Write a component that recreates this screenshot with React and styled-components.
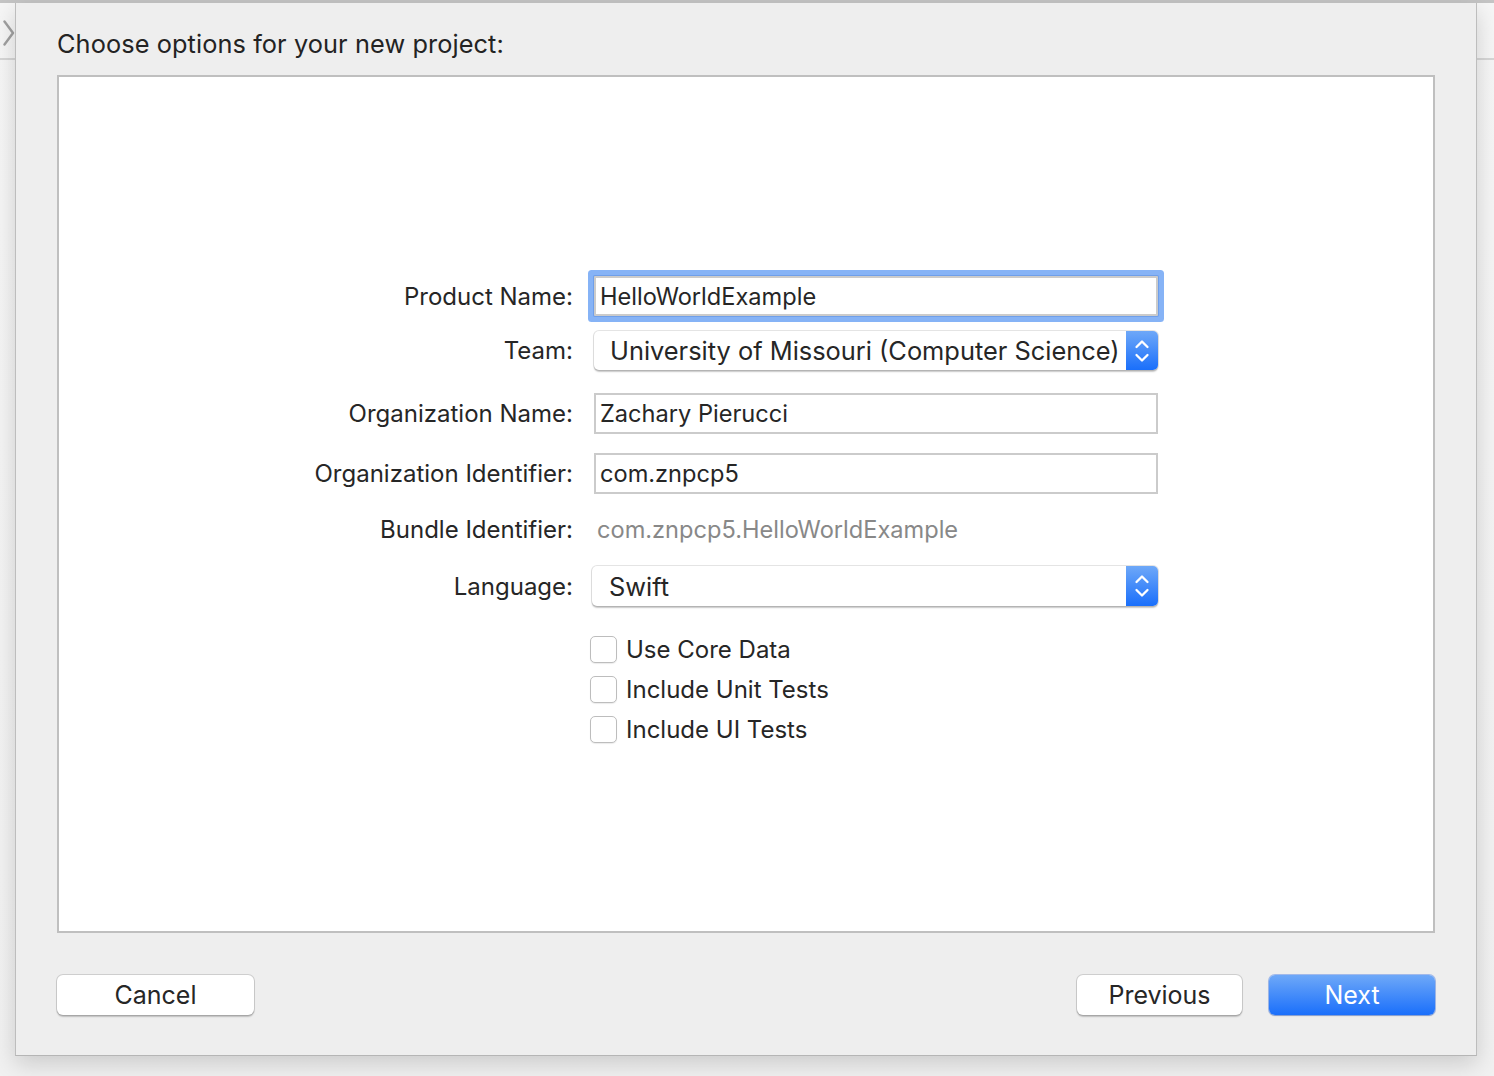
import React from 'react';
import styled, { createGlobalStyle } from 'styled-components';

const Global = createGlobalStyle`
  html, body { margin: 0; padding: 0; }
  body {
    width: 1494px;
    height: 1076px;
    overflow: hidden;
    font-family: Inter, "Helvetica Neue", "Liberation Sans", Arial, sans-serif;
    background: #f5f5f5;
    -webkit-font-smoothing: antialiased;
  }
`;

const Window = styled.div`
  position: relative;
  width: 1494px;
  height: 1076px;
  box-sizing: border-box;
  border-top: 3px solid #c4c4c4;
  background: linear-gradient(#f6f6f6, #f1f1f1);
  display: flex;
  flex-direction: column;
`;

const Toolbar = styled.div`
  height: 57px;
  border-bottom: 2px solid #d6d6d6;
  display: flex;
  align-items: flex-start;
  padding: 17px 0 0 3px;
  box-sizing: border-box;
`;

const Sheet = styled.div`
  position: absolute;
  left: 15px;
  top: 0;
  width: 1462px;
  height: 1053px;
  box-sizing: border-box;
  background: #eeeeee;
  border-left: 1px solid #bdbdbd;
  border-right: 1px solid #bdbdbd;
  border-bottom: 1px solid #b5b5b5;
  box-shadow: 0 8px 22px rgba(0, 0, 0, 0.16);
  display: flex;
  flex-direction: column;
  padding: 0 41px;
`;

const Title = styled.div`
  height: 72px;
  box-sizing: border-box;
  padding-top: 8px;
  display: flex;
  align-items: center;
  font-size: 25.3px;
  color: #232323;
  letter-spacing: 0.1px;
`;

const ContentBox = styled.div`
  height: 858px;
  box-sizing: border-box;
  border: 2px solid #bfbfbf;
  background: #ffffff;
  display: flex;
  flex-direction: column;
  padding-top: 199px;
`;

const Row = styled.div`
  display: grid;
  grid-template-columns: 514px 564px;
  column-gap: 21px;
  align-items: center;
  height: ${p => p.$h}px;
  margin-top: ${p => p.$mt || 0}px;
`;

const Label = styled.div`
  text-align: right;
  font-size: 24px;
  color: #262626;
`;

const TextField = styled.input`
  height: 100%;
  width: 100%;
  box-sizing: border-box;
  margin: 0;
  border: 2px solid #cbcbcb;
  border-radius: ${p => (p.$focused ? '1px' : '0')};
  padding: 0 4px;
  font: inherit;
  font-size: 23.6px;
  color: #262626;
  background: #fff;
  outline: none;
  box-shadow: ${p =>
    p.$focused ? '0 0 0 1px #6f9fea, 0 0 0 6px #86b3f6' : 'none'};
`;

const StaticValue = styled.div`
  font-size: 23.6px;
  color: #888888;
  padding-left: 3px;
`;

const Popup = styled.div`
  height: 100%;
  margin-left: ${p => p.$shift || 0}px;
  display: flex;
  align-items: stretch;
  background: #fff;
  border-radius: 5px;
  box-shadow: 0 0 0 1px rgba(0, 0, 0, 0.1), 0 1.5px 1.5px rgba(0, 0, 0, 0.22);
  overflow: hidden;
`;

const PopupText = styled.div`
  flex: 1;
  display: flex;
  align-items: center;
  padding-left: ${p => p.$pad}px;
  font-size: 25.4px;
  color: #262626;
`;

const Stepper = styled.div`
  width: 32px;
  display: flex;
  align-items: center;
  justify-content: center;
  background: linear-gradient(#6ea8f8, #1a6ffb);
`;

const CheckRow = styled.label`
  display: flex;
  align-items: center;
  height: 40px;
  margin-left: -4px;
`;

const CheckBox = styled.span`
  width: 27px;
  height: 27px;
  box-sizing: border-box;
  border: 1.5px solid #bdbdbd;
  border-radius: 5px;
  background: #fff;
  box-shadow: 0 1px 1px rgba(0, 0, 0, 0.08);
`;

const CheckText = styled.span`
  margin-left: 9px;
  font-size: 24px;
  color: #262626;
`;

const Footer = styled.div`
  display: flex;
  align-items: center;
  margin-top: 42px;
  height: 40px;
`;

const Spacer = styled.div`
  flex: 1;
`;

const Button = styled.button`
  width: ${p => p.$w}px;
  height: 40px;
  margin: 0 0 0 ${p => p.$ml || 0}px;
  padding: 0;
  box-sizing: border-box;
  border-radius: 6px;
  font-family: inherit;
  font-size: 25px;
  border: none;
  color: ${p => (p.$primary ? '#ffffff' : '#262626')};
  background: ${p =>
    p.$primary ? 'linear-gradient(#6ea8f8, #1a6ffb)' : '#ffffff'};
  box-shadow: ${p =>
    p.$primary
      ? '0 0 0 1px rgba(20, 90, 230, 0.35), 0 1px 1.5px rgba(0, 0, 0, 0.2)'
      : '0 0 0 1px rgba(0, 0, 0, 0.13), 0 1.5px 1.5px rgba(0, 0, 0, 0.2)'};
`;

const Chevron = () => (
  <svg width="12" height="28" viewBox="0 0 12 28">
    <path d="M1.5 1.5 L10 13 L1.5 24.5" fill="none" stroke="#a0a0a0" strokeWidth="2.4" strokeLinecap="round" strokeLinejoin="round" />
  </svg>
);

const UpDown = () => (
  <svg width="16" height="26" viewBox="0 0 16 26">
    <path d="M2.5 9 L8 3.5 L13.5 9" fill="none" stroke="#fff" strokeWidth="2.3" strokeLinecap="round" strokeLinejoin="round" />
    <path d="M2.5 17 L8 22.5 L13.5 17" fill="none" stroke="#fff" strokeWidth="2.3" strokeLinecap="round" strokeLinejoin="round" />
  </svg>
);

export default function App() {
  return (
    <>
      <Global />
      <Window>
        <Toolbar>
          <Chevron />
        </Toolbar>
        <Sheet>
          <Title>Choose options for your new project:</Title>
          <ContentBox>
            <Row $h={40}>
              <Label>Product Name:</Label>
              <TextField $focused readOnly value="HelloWorldExample" />
            </Row>
            <Row $h={39} $mt={15}>
              <Label>Team:</Label>
              <Popup>
                <PopupText $pad={16}>University of Missouri (Computer Science)</PopupText>
                <Stepper><UpDown /></Stepper>
              </Popup>
            </Row>
            <Row $h={41} $mt={23}>
              <Label>Organization Name:</Label>
              <TextField readOnly value="Zachary Pierucci" />
            </Row>
            <Row $h={41} $mt={19}>
              <Label>Organization Identifier:</Label>
              <TextField readOnly value="com.znpcp5" />
            </Row>
            <Row $h={38} $mt={16}>
              <Label>Bundle Identifier:</Label>
              <StaticValue>com.znpcp5.HelloWorldExample</StaticValue>
            </Row>
            <Row $h={40} $mt={18}>
              <Label>Language:</Label>
              <Popup $shift={-2}>
                <PopupText $pad={17}>Swift</PopupText>
                <Stepper><UpDown /></Stepper>
              </Popup>
            </Row>
            <Row $h={40} $mt={23}>
              <span />
              <CheckRow><CheckBox /><CheckText>Use Core Data</CheckText></CheckRow>
            </Row>
            <Row $h={40}>
              <span />
              <CheckRow><CheckBox /><CheckText>Include Unit Tests</CheckText></CheckRow>
            </Row>
            <Row $h={40}>
              <span />
              <CheckRow><CheckBox /><CheckText>Include UI Tests</CheckText></CheckRow>
            </Row>
          </ContentBox>
          <Footer>
            <Button $w={197}>Cancel</Button>
            <Spacer />
            <Button $w={165}>Previous</Button>
            <Button $w={166} $ml={27} $primary>Next</Button>
          </Footer>
        </Sheet>
      </Window>
    </>
  );
}
